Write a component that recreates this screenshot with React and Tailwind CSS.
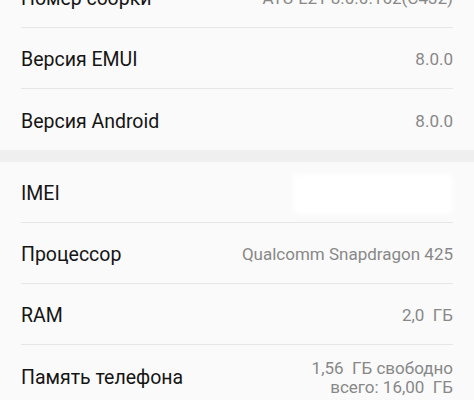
const rows = [
  { label: "Номер сборки", value: "ATU-L21 8.0.0.162(C432)" },
  { label: "Версия EMUI", value: "8.0.0" },
  { label: "Версия Android", value: "8.0.0", last: true },
];

const rows2 = [
  { label: "IMEI", hidden: true },
  { label: "Процессор", value: "Qualcomm Snapdragon 425" },
  { label: "RAM", value: "2,0  ГБ" },
  { label: "Память телефона", value: ["1,56  ГБ свободно", "всего: 16,00  ГБ"], last: true },
];

function Row({ label, value, hidden, last }) {
  return (
    <div
      className={`flex h-[61px] items-center justify-between pt-[4px] ${
        last ? "" : "border-b border-[#e6e6e6]"
      }`}
    >
      <span className="text-[19.5px] text-[#151515]">{label}</span>
      {hidden ? (
        <div className="h-[40px] w-[160px] rounded bg-white blur-[3px]" />
      ) : Array.isArray(value) ? (
        <div className="flex flex-col items-end text-[17px] leading-[19px] text-[#888]">
          {value.map((v) => (
            <span key={v} className="whitespace-pre">{v}</span>
          ))}
        </div>
      ) : (
        <span className="whitespace-pre text-[17px] text-[#888]">{value}</span>
      )}
    </div>
  );
}

export default function App() {
  return (
    <div
      className="h-[400px] w-[474px] overflow-hidden bg-[#fafafa]"
      style={{ fontFamily: "Roboto, 'Noto Sans', sans-serif" }}
    >
      <div className="-mt-[33px] px-[21px]">
        {rows.map((r) => (
          <Row key={r.label} {...r} />
        ))}
      </div>
      <div className="h-[12px] bg-[#efefef]" />
      <div className="px-[21px]">
        {rows2.map((r) => (
          <Row key={r.label} {...r} />
        ))}
      </div>
    </div>
  );
}
